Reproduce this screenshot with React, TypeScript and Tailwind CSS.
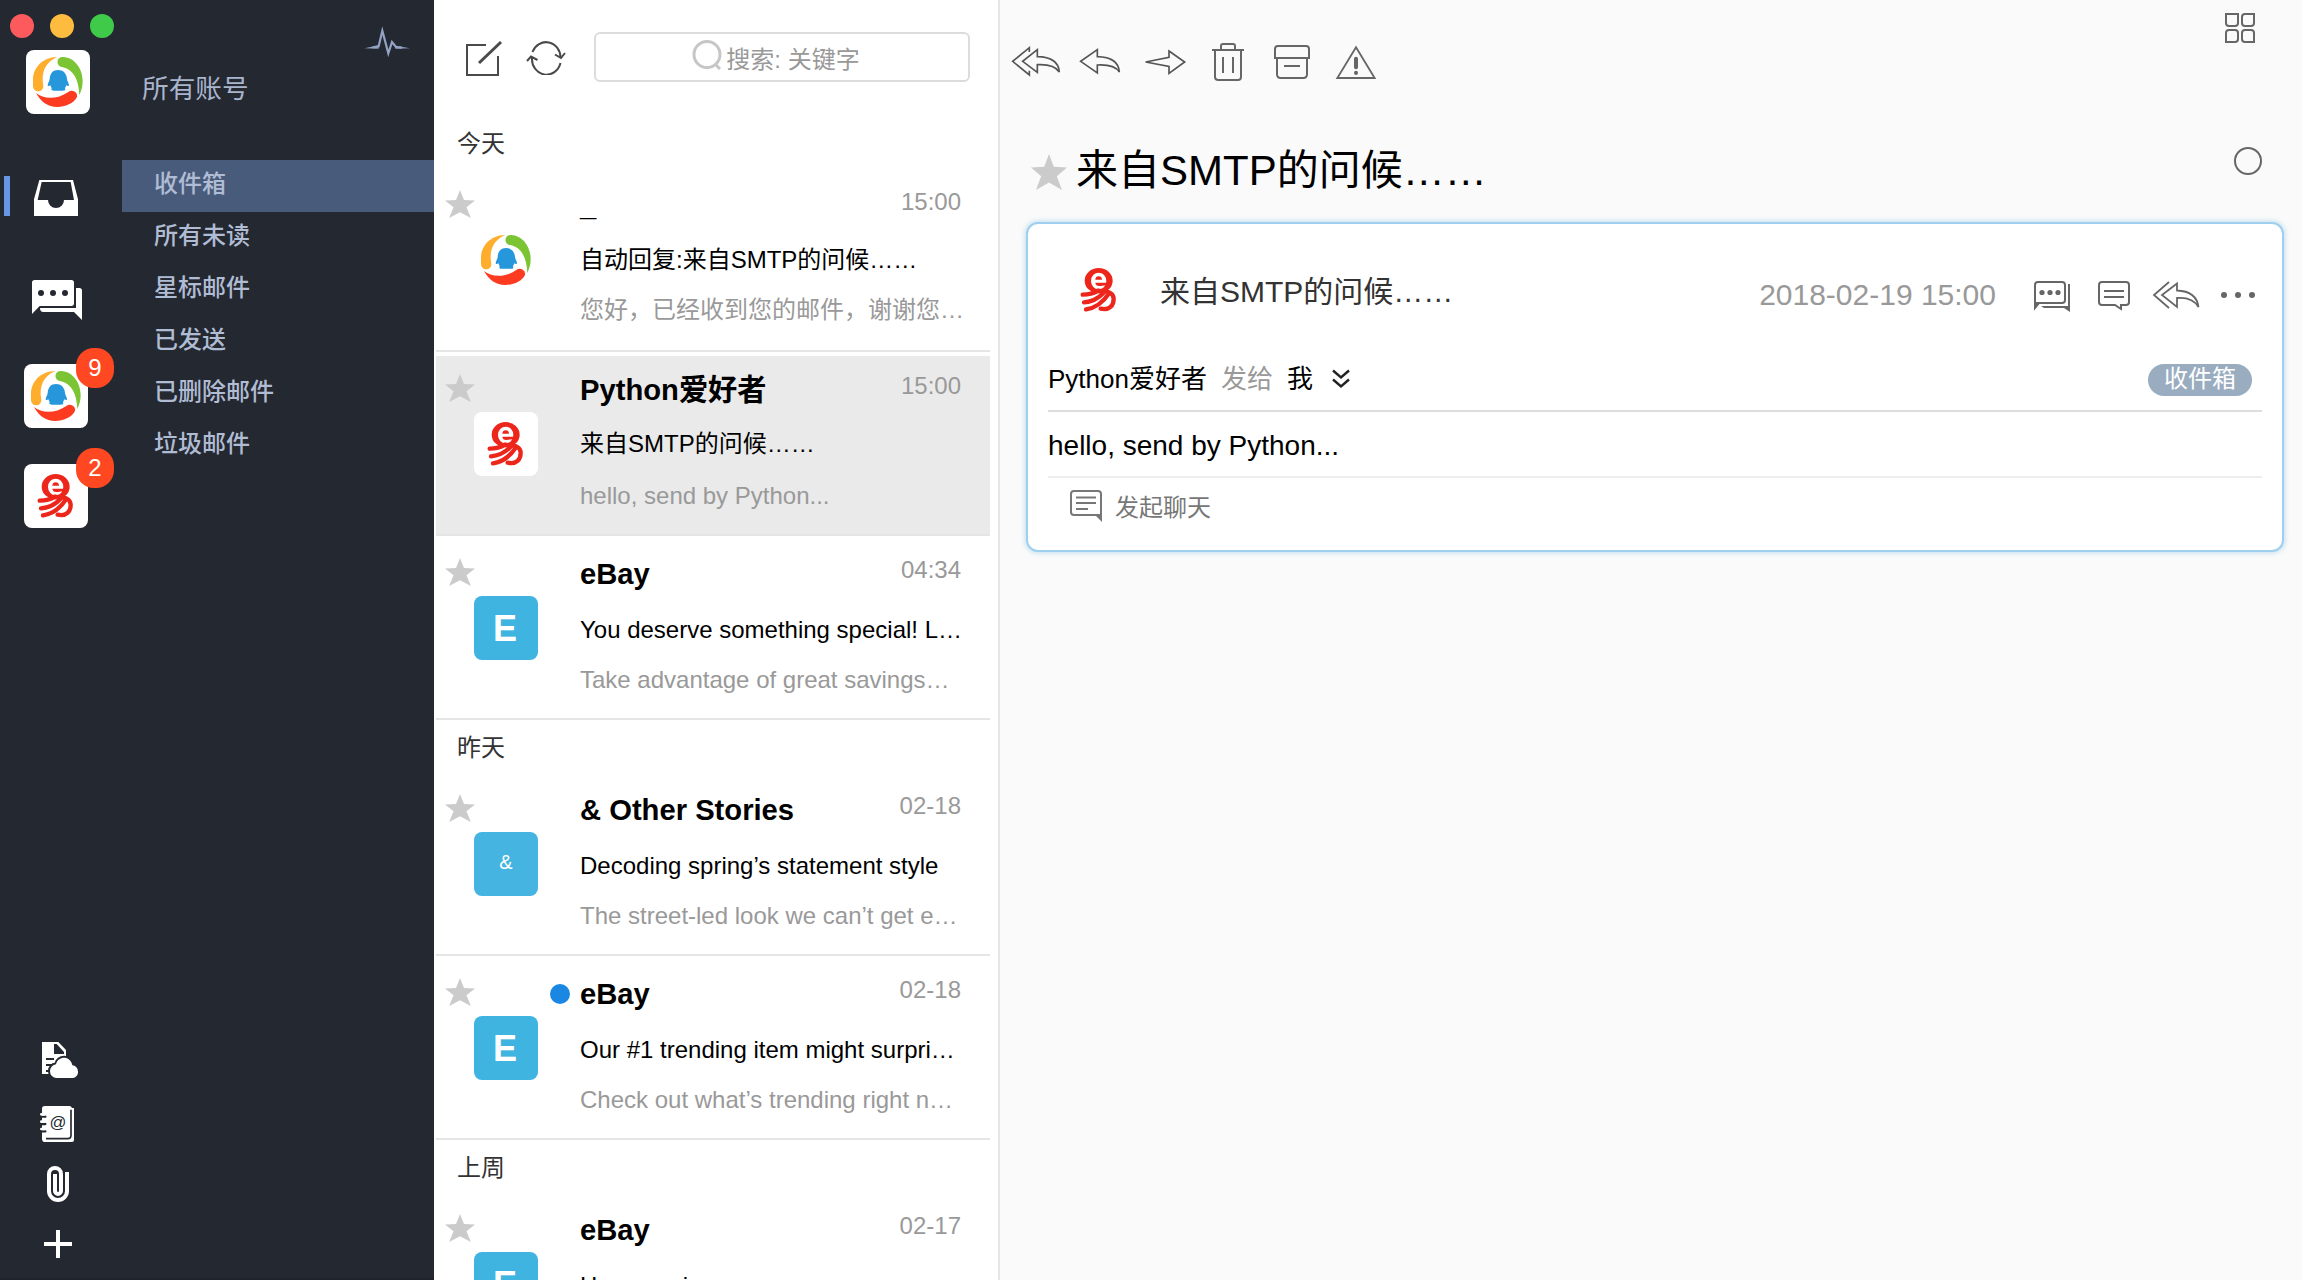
import React from "react";

type Kind = "qq" | "yi" | "E" | "&";

interface Mail {
  kind: Kind;
  name: string;
  time: string;
  subject: string;
  preview: string;
  selected?: boolean;
  unread?: boolean;
}

const groups: { label: string; mails: Mail[] }[] = [
  {
    label: "今天",
    mails: [
      { kind: "qq", name: "_", time: "15:00", subject: "自动回复:来自SMTP的问候……", preview: "您好，已经收到您的邮件，谢谢您…" },
      { kind: "yi", name: "Python爱好者", time: "15:00", subject: "来自SMTP的问候……", preview: "hello, send by Python...", selected: true },
      { kind: "E", name: "eBay", time: "04:34", subject: "You deserve something special! L…", preview: "Take advantage of great savings…" },
    ],
  },
  {
    label: "昨天",
    mails: [
      { kind: "&", name: "& Other Stories", time: "02-18", subject: "Decoding spring’s statement style", preview: "The street-led look we can’t get e…" },
      { kind: "E", name: "eBay", time: "02-18", subject: "Our #1 trending item might surpri…", preview: "Check out what’s trending right n…", unread: true },
    ],
  },
  {
    label: "上周",
    mails: [{ kind: "E", name: "eBay", time: "02-17", subject: "Have a min", preview: "" }],
  },
];

const folders = ["收件箱", "所有未读", "星标邮件", "已发送", "已删除邮件", "垃圾邮件"];

function QQLogo() {
  return (
    <svg viewBox="78 150 192 192" className="block size-16">
      <path fill="#ffad2c" d="M172 171C125 172 99 205 99 240V259A15 15 0 0 0 130 258C122 215 138 185 172 171Z" />
      <path fill="#7bc433" d="M189 171C225 172 248 208 248 243C248 260 244 272 238 285C236 240 222 208 186 201A15 15 0 0 1 189 171Z" />
      <path fill="#fc3b20" d="M108 279C130 297 170 300 205 276A16 16 0 0 1 231 291C222 310 195 321 172 321C143 321 122 305 108 279Z" />
      <path fill="#2797dc" d="M174 210c-15 0-24 10-25 27c0 5-6 13-6 20q3 3 8-1l4 9c-4 8 6 8 16 7h8c10 1 20 1 16-7l4-9q5 4 8 1c0-7-6-15-6-20c-1-17-12-27-27-27z" />
    </svg>
  );
}

function YiLogo() {
  return (
    <svg viewBox="72 582 192 192" className="block size-16" fill="none" strokeLinecap="round">
      <ellipse cx="167" cy="650" rx="42" ry="38" fill="#ed261c" />
      <ellipse cx="167" cy="651" rx="23" ry="25" fill="#fff" />
      <path d="M157 647Q158 637 167 637Q176 637 177 647Z" fill="#ed261c" />
      <path d="M157 656H192V664C184 662 177 666 169 666C162 666 157 662 157 656Z" fill="#ed261c" />
      <g stroke="#ed261c" strokeWidth="13">
        <path d="M119 692C140 692 152 688 165 680" />
        <path d="M123 715C148 713 165 704 182 686" />
        <path d="M129 736C158 732 180 715 198 688" />
        <path d="M173 734C200 740 212 724 212 704C211 688 200 680 165 681" />
      </g>
    </svg>
  );
}

function Avatar({ kind }: { kind: Kind }) {
  if (kind === "qq") return <div className="size-16 rounded-lg bg-white"><QQLogo /></div>;
  if (kind === "yi") return <div className="size-16 rounded-lg bg-white"><YiLogo /></div>;
  if (kind === "E")
    return <div className="flex size-16 items-center justify-center rounded-lg bg-[#3fb4e0] pt-0.5 pr-0.5 text-[36px] leading-none font-bold text-white">E</div>;
  return <div className="flex size-16 items-center justify-center rounded-lg bg-[#45b4e1] pb-1 text-[20px] leading-none text-white">&amp;</div>;
}

function Star({ className }: { className: string }) {
  return (
    <svg viewBox="0 0 36 36" preserveAspectRatio="none" className={className}>
      <path fill="#cbcbcb" d="M18 0L22.8 12.8L36 13.6L25.8 22.2L31 36L18 28.6L5 36L10.2 22.2L0 13.6L13.2 12.8Z" />
    </svg>
  );
}

function MailRow({ mail }: { mail: Mail }) {
  return (
    <div className="h-[184px] shrink-0 border-b-2 border-[#e5e5e5]">
      <div className={mail.selected ? "mt-1 flex h-[178px] bg-[#eaeaea]" : "flex h-[182px]"}>
        <div className={mail.selected ? "-mt-1 flex flex-1" : "flex flex-1"}>
          <div className="w-[38px] shrink-0 pt-[22px] pl-[9px]">
            <Star className="h-7 w-[30px] max-w-none" />
          </div>
          <div className="shrink-0 pt-[60px]"><Avatar kind={mail.kind} /></div>
          <div className="w-[42px] shrink-0 pt-7 pl-3">
            {mail.unread && <div className="size-5 rounded-full bg-[#1a87e2]" />}
          </div>
          <div className="flex w-[381px] flex-col pt-5 whitespace-nowrap">
            <div className="flex h-9 justify-between">
              <span className="text-[29.2px] leading-9 font-bold text-black">{mail.name}</span>
              <span className="text-[24px] leading-7 text-[#999]">{mail.time}</span>
            </div>
            <div className={/^[A-Z]/.test(mail.subject) ? "mt-5 text-[24px] leading-9 text-black" : "mt-[18px] mb-0.5 text-[24px] leading-9 text-black"}>{mail.subject}</div>
            <div className={/^[A-Za-z]/.test(mail.preview) ? "mt-[14px] text-[24px] leading-9 text-[#999]" : "mt-3 text-[24px] leading-9 text-[#999]"}>{mail.preview}</div>
          </div>
        </div>
      </div>
    </div>
  );
}

function Sidebar() {
  return (
    <aside className="flex h-full w-[434px] shrink-0 border-b-2 border-[#20232b] bg-[#242830]">
      <div className="flex w-[122px] shrink-0 flex-col">
        <div className="flex gap-4 pt-[14px] pl-[10px]">
          <span className="size-6 rounded-full bg-[#fc5a5d]" />
          <span className="size-6 rounded-full bg-[#fdbc40]" />
          <span className="size-6 rounded-full bg-[#40ca4a]" />
        </div>
        <div className="mt-3 ml-[26px]"><Avatar kind="qq" /></div>
        <div className="mt-[62px] flex h-10 items-end pl-1">
          <span className="h-10 w-1.5 bg-[#6796e4]" />
          <svg viewBox="102 540 132 108" className="ml-6 h-9 w-11">
            <path fill="#fff" fillRule="evenodd" d="M118 540H219L234 598V648H102V598ZM125 546L113 600H144A24 24 0 0 0 192 600H222L212 546Z" />
          </svg>
        </div>
        <svg viewBox="96 30 150 120" className="mt-16 ml-8 h-10 w-[50px]" fill="#fff">
          <path d="M104 30H214Q222 30 222 38V100Q222 108 214 108H119L96 132V38Q96 30 104 30Z" />
          <path d="M228 54H238Q246 54 246 62V150L222 126H130Q120 126 120 114H228Z" />
          <g fill="#242830"><circle cx="123" cy="69" r="9" /><circle cx="159" cy="69" r="9" /><circle cx="195" cy="69" r="9" /></g>
        </svg>
        <div className="relative mt-11 ml-6 w-16">
          <Avatar kind="qq" />
          <span className="absolute -top-4 left-[52px] flex h-10 w-[38px] items-center justify-center rounded-[18px] bg-[#ff4821] text-[24px] text-white">9</span>
        </div>
        <div className="relative mt-9 ml-6 w-16">
          <Avatar kind="yi" />
          <span className="absolute -top-4 left-[52px] flex h-10 w-[38px] items-center justify-center rounded-[18px] bg-[#ff4821] text-[24px] text-white">2</span>
        </div>
        <div className="mt-auto flex flex-col pb-5">
          <svg viewBox="126 66 108 108" className="ml-[42px] size-9">
            <path fill="#fff" fillRule="evenodd" d="M126 66H175L198 90V140H180V162H126ZM162 72V102H192V96L170 72Z" />
            <path stroke="#242830" strokeWidth="6" d="M138 117H162M138 135H158M138 153H150" />
            <path fill="#fff" stroke="#242830" strokeWidth="12" paintOrder="stroke" d="M168 174A18 21 0 0 1 150 152A20 20 0 0 1 168 133C174 106 212 106 217 136A18 19 0 0 1 234 155A17 18 0 0 1 218 174Z" />
          </svg>
          <svg viewBox="120 258 102 108" className="mt-7 ml-10 h-9 w-[34px]">
            <path fill="#fff" d="M134 258H208Q214 258 216 264H222V360Q222 366 216 366H136Q126 366 126 356V266Q126 258 134 258Z" />
            <path fill="none" stroke="#242830" strokeWidth="5" d="M213 269V346Q213 356 203 356H138" />
            <path stroke="#242830" strokeWidth="7" strokeLinecap="round" d="M124 290H136M124 312H136M124 334H136" />
            <path stroke="#fff" strokeWidth="8" strokeLinecap="round" d="M124 283H134M124 305H134M124 327H134" />
            <text x="174" y="323" textAnchor="middle" fontSize="50" fill="#242830">@</text>
          </svg>
          <svg viewBox="141 438 66 108" className="mt-6 ml-[47px] h-9 w-[22px]" fill="none" stroke="#fff" strokeWidth="12">
            <path d="M201 456V513A27 27 0 0 1 147 513V462A18 18 0 0 1 183 462V512A9 10 0 0 1 165 512V462" />
          </svg>
          <svg viewBox="0 0 28 28" className="mt-7 ml-11 size-7" stroke="#fff" strokeWidth="4"><path d="M14 0V28M0 14H28" /></svg>
        </div>
      </div>
      <div className="flex flex-1 flex-col">
        <svg viewBox="1092 78 138 96" className="mt-[26px] mr-6 h-8 w-[46px] self-end">
          <path fill="none" stroke="#93a3c4" strokeWidth="6.5" strokeMiterlimit="8" d="M1118 142L1136 139L1147 92L1165 160L1176 126L1188 141L1206 143" />
          <path fill="#93a3c4" d="M1093 145L1136 136V146ZM1230 145L1186 137V146Z" />
        </svg>
        <div className="mt-[13px] ml-5 text-[26.67px] leading-9 text-[#a9b5cd]">所有账号</div>
        <nav className="mt-[53px] flex flex-col">
          {folders.map((f, i) => (
            <div key={f} className={i === 0 ? "h-[52px] bg-[#495b7b] pl-8 text-[24px] leading-[48px] font-medium text-[#b0bcd4]" : "h-[52px] pl-8 text-[24px] leading-[48px] font-medium text-[#b0bcd4]"}>
              {f}
            </div>
          ))}
        </nav>
      </div>
    </aside>
  );
}

function MailList() {
  return (
    <section className="flex h-full w-[566px] shrink-0 flex-col overflow-hidden border-r-2 border-[#e6e6e6] bg-white pl-0.5">
      <div className="flex h-[116px] shrink-0 pt-8">
        <svg viewBox="0 0 38 38" className="mt-[7px] ml-[29px] size-[38px]" fill="none" stroke="#4a4a4a" strokeWidth="2">
          <path d="M21 6H2V36H33V17" /><path d="M14 24L36 3" strokeWidth="3" />
        </svg>
        <svg viewBox="0 0 40 34" className="mt-[9px] ml-[23px] h-[34px] w-10" fill="none" stroke="#4a4a4a" strokeWidth="2">
          <path d="M6.500 11A14.500 15.500 0 0 1 34.500 17M34.500 22A14.500 15.500 0 0 1 6 17" />
          <path d="M29 13.500L35 17L39 12M1 20L5 15.500L11.500 19" />
        </svg>
        <div className="ml-[28px] flex h-[50px] w-[376px] items-center justify-center rounded-md border-2 border-[#dcdcdc] text-[24px] text-[#999]">
          <svg viewBox="0 0 30 30" className="mr-1 -mt-1 h-[30px] w-[30px] shrink-0" fill="none" stroke="#c6c6c6" strokeWidth="3">
            <ellipse cx="15" cy="14.500" rx="13" ry="13" /><path d="M23 24L28 29" />
          </svg>
          <span className="pt-1.5 pr-3">搜索: 关键字</span>
        </div>
      </div>
      <div className="flex w-[554px] flex-col">
        {groups.map((g) => (
          <React.Fragment key={g.label}>
            <div className="h-[52px] shrink-0 pl-[21px] text-[24px] leading-[56px] text-[#333]">{g.label}</div>
            {g.mails.map((m, i) => <MailRow key={i} mail={m} />)}
          </React.Fragment>
        ))}
      </div>
    </section>
  );
}

function ReplyAll({ className }: { className: string }) {
  return (
    <svg viewBox="30 132 156 102" className={className} fill="none" stroke="#555" strokeWidth="5">
      <path d="M88 156V143L38 184L88 225V212" />
      <path d="M112 149L68 184L112 217V194C150 192 168 200 178 216C176 184 152 171 112 170Z" />
    </svg>
  );
}

function Toolbar() {
  return (
    <div className="flex h-[116px] shrink-0 pl-2.5">
      <ReplyAll className="mt-11 h-[34px] w-[52px]" />
      <svg viewBox="234 138 132 90" className="mt-[46px] ml-4 h-[30px] w-11" fill="none" stroke="#555" strokeWidth="5">
        <path d="M292 149L242 184L292 219V195C330 193 348 200 358 216C356 184 330 171 292 170Z" />
      </svg>
      <svg viewBox="426 144 135 84" className="mt-12 ml-5 h-7 w-[45px]" fill="none" stroke="#555" strokeWidth="5">
        <path d="M507 153L554 186L507 220V199L437 186L507 172Z" />
      </svg>
      <svg viewBox="633 126 102 120" className="mt-[42px] ml-6 h-10 w-[34px]" fill="none" stroke="#666" strokeWidth="6">
        <path d="M636 150H732M663 150V138Q663 132 669 132H699Q705 132 705 138V150M645 150V230Q645 240 655 240H714Q723 240 723 230V150M669 171V219M699 171V219" />
      </svg>
      <svg viewBox="819 132 114 108" className="mt-11 ml-7 h-9 w-[38px]" fill="none" stroke="#666" strokeWidth="6">
        <path d="M825 174V147Q825 138 834 138H918Q927 138 927 147V174ZM831 174V223Q831 234 842 234H910Q921 234 921 223V174M852 198H900" />
      </svg>
      <svg viewBox="1005 132 126 108" className="mt-11 ml-6 h-9 w-[42px]" fill="none" stroke="#666" strokeWidth="5.500">
        <path d="M1068 142L1124 234H1012Z" /><path strokeWidth="12" strokeLinecap="round" d="M1068 176V202M1068 218V219" />
      </svg>
      <svg viewBox="0 0 30 30" className="mt-[13px] mr-[47px] ml-auto size-[30px]" fill="none" stroke="#666" strokeWidth="2">
        <path d="M1 1H13V10Q13 13 10 13H4Q1 13 1 10ZM29 1H20Q17 1 17 4V10Q17 13 20 13H26Q29 13 29 10ZM1 29V20Q1 17 4 17H10Q13 17 13 20V26Q13 29 10 29ZM29 29H20Q17 29 17 26V20Q17 17 20 17H26Q29 17 29 20Z" />
      </svg>
    </div>
  );
}

function Reader() {
  return (
    <main className="flex h-full flex-1 flex-col bg-[#fafafa]">
      <Toolbar />
      <div className="flex h-[106px] shrink-0 pl-[31px]">
        <Star className="mt-[38px] size-9" />
        <h1 className="mt-[29px] ml-[9px] text-[42px] leading-[52px] text-black">来自SMTP的问候……</h1>
        <span className="mt-[31px] mr-10 ml-auto size-7 rounded-full border-2 border-[#666]" />
      </div>
      <article className="mr-[18px] ml-[26px] flex h-[330px] flex-col rounded-xl border-2 border-[#9fcfee] bg-white px-5 shadow-[0_0_5px_1px_rgba(150,200,230,0.55)]">
        <header className="flex h-[100px] pt-[34px]">
          <div className="ml-[19px]"><Avatar kind="yi" /></div>
          <div className="mt-[14px] ml-[29px] text-[30px] leading-10 text-[#333]">来自SMTP的问候……</div>
          <div className="mt-[17px] ml-auto text-[30px] leading-10 text-[#999]">2018-02-19 15:00</div>
          <svg viewBox="0 0 38 32" className="mt-[22px] ml-[37px] h-8 w-[38px]" fill="none" stroke="#666" strokeWidth="2">
            <path d="M5 2H29Q32 2 32 5V20Q32 23 29 23H6L2 28V5Q2 2 5 2Z" />
            <path fill="#666" stroke="none" d="M1 22H8L1 30ZM35 4H37V32L31 28H11L8 26H35Z" />
            <g fill="#666" stroke="none"><circle cx="9" cy="12.500" r="2.600" /><circle cx="17" cy="12.500" r="2.600" /><circle cx="25" cy="12.500" r="2.600" /></g>
          </svg>
          <svg viewBox="0 0 32 32" className="mt-[23px] ml-[27px] size-8" fill="none" stroke="#666" strokeWidth="2">
            <path d="M4 1H28Q31 1 31 4V21Q31 24 28 24H23V28L17 24H4Q1 24 1 21V4Q1 1 4 1ZM6 10H26M6 16H26" />
          </svg>
          <svg viewBox="0 0 48 30" className="mt-[22px] ml-[22px] h-[30px] w-12" fill="none" stroke="#666" strokeWidth="1.800">
            <path d="M17 2L2 15L17 28" /><path d="M25 3.500L10 15L25 27V18C37 17 43 21 46.500 27C45 16 38 11 25 10.500Z" />
          </svg>
          <svg viewBox="0 0 36 8" className="mt-[33px] mr-1.5 ml-5 h-2 w-9" fill="#666">
            <circle cx="4" cy="4" r="3" /><circle cx="18" cy="4" r="3" /><circle cx="32" cy="4" r="3" />
          </svg>
        </header>
        <div className="flex h-[88px] border-b-2 border-[#ddd] pt-[35px] text-[26px] leading-10 text-black">
          <span>Python爱好者</span>
          <span className="ml-[14px] text-[#999]">发给</span>
          <span className="ml-[14px]">我</span>
          <svg viewBox="0 0 18 20" className="mt-2.5 ml-[19px] h-5 w-[18px]" fill="none" stroke="#222" strokeWidth="2.400">
            <path d="M1 1.500L9 8.500L17 1.500M1 10.500L9 17.500L17 10.500" />
          </svg>
          <span className="mt-[5px] mr-[10px] ml-auto flex h-8 w-[104px] items-center justify-center rounded-full bg-[#9aadc0] pb-0.5 text-[24px] leading-none text-white">收件箱</span>
        </div>
        <div className="h-[66px] border-b-2 border-[#eee] text-[28px] leading-[67px] text-black">hello, send by Python...</div>
        <footer className="flex pt-3 pl-[22px]">
          <svg viewBox="0 0 32 32" className="h-8 w-8" fill="none" stroke="#777" strokeWidth="2">
            <path d="M4 1H28Q31 1 31 4V25H4Q1 25 1 22V4Q1 1 4 1ZM6 7.500H26M6 13H26M6 19H18" />
            <path fill="#777" stroke="none" d="M25 25H32V32Z" />
          </svg>
          <span className="mt-1 ml-[13px] text-[24px] leading-7 text-[#777]">发起聊天</span>
        </footer>
      </article>
    </main>
  );
}

export default function App() {
  return (
    <div className="flex h-[1280px] w-[2302px] overflow-hidden bg-white font-['Liberation_Sans','Noto_Sans_CJK_SC',sans-serif]">
      <Sidebar />
      <MailList />
      <Reader />
    </div>
  );
}
